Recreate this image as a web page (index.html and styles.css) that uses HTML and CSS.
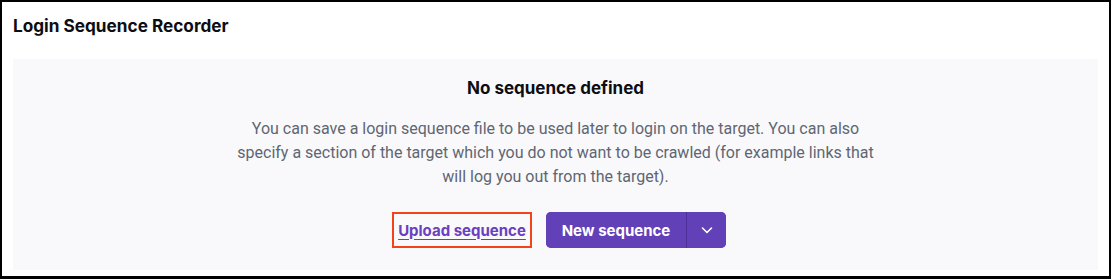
FILE: index.html
```html
<!DOCTYPE html>
<html>
<head>
<meta charset="utf-8">
<link rel="stylesheet" href="styles.css">
</head>
<body>
<div class="frame">
  <h1 class="title">Login Sequence Recorder</h1>
  <div class="panel">
    <h2 class="heading">No sequence defined</h2>
    <p class="desc">You can save a login sequence file to be used later to login on the target. You can also specify a section of the target which you do not want to be crawled (for example links that will log you out from the target).</p>
    <div class="actions">
      <a class="upload" href="#">Upload sequence</a>
      <div class="split">
        <button class="split-main">New sequence</button>
        <button class="split-toggle" aria-label="More">
          <svg width="14" height="14" viewBox="0 0 14 14"><path d="M2.5 5 L7 9.5 L11.5 5" fill="none" stroke="#fff" stroke-width="1.6" stroke-linecap="round" stroke-linejoin="round"/></svg>
        </button>
      </div>
    </div>
  </div>
</div>
</body>
</html>
```

FILE: styles.css
```css
html, body { margin: 0; padding: 0; background: #fff; }
.frame {
  box-sizing: border-box;
  width: 1111px;
  height: 279px;
  border: 2px solid #000;
  border-bottom-width: 3px;
  padding: 0 11px 6px 11px;
  display: flex;
  flex-direction: column;
}
.title {
  box-sizing: border-box;
  margin: 0;
  height: 57px;
  padding-top: 12px;
  line-height: 24px;
  font-family: Inter, "Noto Sans", sans-serif;
  font-size: 17.2px;
  font-weight: 700;
  color: #0d0d12;
}
.panel {
  flex: 1;
  background: #f9f9fb;
  display: flex;
  flex-direction: column;
  align-items: center;
  padding-top: 17px;
}
.heading {
  margin: 0;
  font-family: Inter, "Noto Sans", sans-serif;
  font-size: 17px;
  line-height: 24px;
  font-weight: 700;
  color: #0d0d12;
}
.desc {
  margin: 17px 0 0 0;
  width: 640px;
  text-align: center;
  font-family: Roboto, "Liberation Sans", sans-serif;
  font-size: 16px;
  line-height: 24px;
  color: #5f6673;
}
.actions {
  margin-top: 23px;
  padding-left: 7px;
  display: flex;
  align-items: center;
  gap: 14px;
}
.upload {
  box-sizing: border-box;
  height: 36px;
  width: 140px;
  border: 2px solid #f2431b;
  display: flex;
  align-items: center;
  justify-content: center;
  font-family: Inter, "Noto Sans", sans-serif;
  font-size: 15px;
  font-weight: 700;
  color: #6a3fc0;
  text-decoration: underline;
  text-underline-offset: 3px;
}
.split {
  display: flex;
  height: 36px;
  border-radius: 5px;
  overflow: hidden;
  background: #6240b8;
}
.split button {
  border: 0;
  background: #6240b8;
  color: #fff;
  font-family: Inter, "Noto Sans", sans-serif;
  font-size: 15px;
  font-weight: 700;
  cursor: pointer;
  display: flex;
  align-items: center;
  justify-content: center;
}
.split-main {
  width: 141px;
  border-right: 1px solid #4b2e98 !important;
}
.split-toggle {
  width: 39px;
  padding: 0;
}
```
